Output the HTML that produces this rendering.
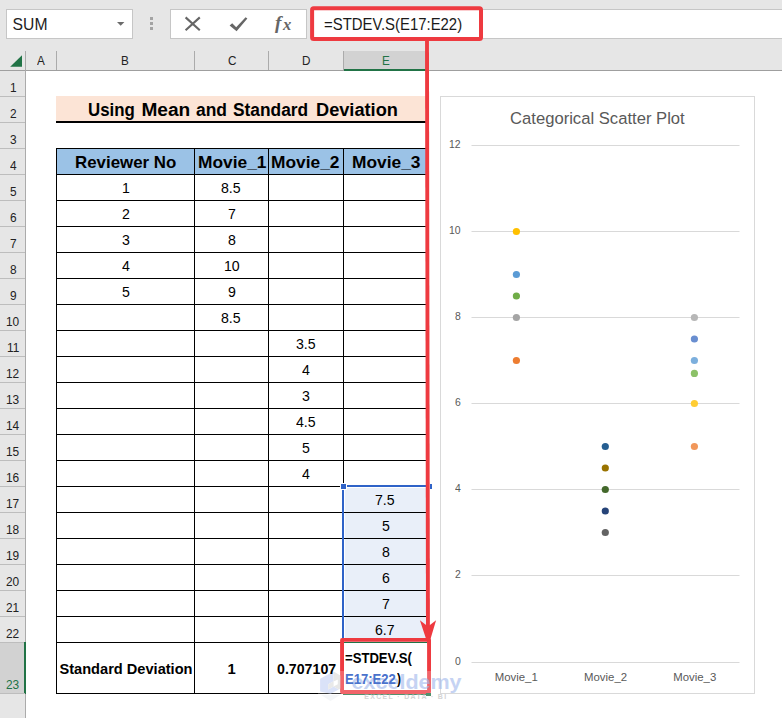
<!DOCTYPE html><html lang="en"><head><meta charset="utf-8"><title>Categorical Scatter Plot - STDEV.S</title><style>html,body{margin:0;padding:0;background:#fff}#root{position:relative;width:782px;height:718px;overflow:hidden;background:#fff;font-family:'Liberation Sans', sans-serif}.b{position:absolute;display:block}.t{position:absolute;white-space:nowrap;line-height:1;transform-origin:0 0;font-kerning:normal}</style></head><body><div id="root">
<div class="b" style="left:0px;top:0px;width:782px;height:70px;background:#e6e6e6"></div>
<div class="b" style="left:6px;top:9px;width:127px;height:30px;background:#fff;border:1px solid #c6c6c6;box-sizing:border-box"></div>
<svg class="b" style="left:116px;top:21px" width="10" height="6" viewBox="0 0 10 6"><polygon points="1,1 8.4,1 4.7,4.8" fill="#6b6b6b"/></svg>
<div class="b" style="left:150px;top:17px;width:3px;height:3px;background:#a3a3a3"></div>
<div class="b" style="left:150px;top:22px;width:3px;height:3px;background:#a3a3a3"></div>
<div class="b" style="left:150px;top:27px;width:3px;height:3px;background:#a3a3a3"></div>
<div class="b" style="left:170px;top:9px;width:137px;height:30px;background:#fff;border:1px solid #c6c6c6;box-sizing:border-box"></div>
<svg class="b" style="left:184px;top:16px" width="18" height="16" viewBox="0 0 18 16"><path d="M1.6 1.4 L15.8 14.2 M15.8 1.4 L1.6 14.2" stroke="#666" stroke-width="2.1" fill="none"/></svg>
<svg class="b" style="left:228px;top:16px" width="21" height="17" viewBox="0 0 21 17"><path d="M1.6 9.6 L4.2 7.2 L8.2 11.2 L17.6 1.2 L19.4 2.6 L8.6 15.2 Z" fill="#666"/></svg>
<div class="b" style="left:311px;top:9px;width:471px;height:30px;background:#fff;border-top:1px solid #c6c6c6;border-bottom:1px solid #c6c6c6;box-sizing:border-box"></div>
<div class="b" style="left:0px;top:70px;width:782px;height:1px;background:#9f9f9f"></div>
<svg class="b" style="left:9px;top:54px" width="14" height="14" viewBox="0 0 14 14"><polygon points="1.2,12.8 13,12.8 13,1.2" fill="#217346"/></svg>
<div class="b" style="left:25px;top:51px;width:1px;height:20px;background:#ababab"></div>
<div class="b" style="left:56px;top:51px;width:1px;height:19px;background:#ababab"></div>
<div class="b" style="left:194px;top:51px;width:1px;height:19px;background:#ababab"></div>
<div class="b" style="left:268px;top:51px;width:1px;height:19px;background:#ababab"></div>
<div class="b" style="left:343px;top:51px;width:1px;height:19px;background:#ababab"></div>
<div class="b" style="left:344px;top:51px;width:83px;height:19px;background:#d2d2d2"></div>
<div class="b" style="left:344px;top:69px;width:83px;height:2px;background:#217346"></div>
<div class="b" style="left:427px;top:51px;width:1px;height:19px;background:#ababab"></div>
<div class="b" style="left:0px;top:71px;width:782px;height:647px;background:#fff"></div>
<div class="b" style="left:0px;top:71px;width:25px;height:647px;background:#e6e6e6"></div>
<div class="b" style="left:25px;top:70px;width:1px;height:648px;background:#ababab"></div>
<div class="b" style="left:0px;top:96px;width:25px;height:1px;background:#bdbdbd"></div>
<div class="b" style="left:0px;top:122px;width:25px;height:1px;background:#bdbdbd"></div>
<div class="b" style="left:0px;top:148px;width:25px;height:1px;background:#bdbdbd"></div>
<div class="b" style="left:0px;top:174px;width:25px;height:1px;background:#bdbdbd"></div>
<div class="b" style="left:0px;top:200px;width:25px;height:1px;background:#bdbdbd"></div>
<div class="b" style="left:0px;top:226px;width:25px;height:1px;background:#bdbdbd"></div>
<div class="b" style="left:0px;top:252px;width:25px;height:1px;background:#bdbdbd"></div>
<div class="b" style="left:0px;top:278px;width:25px;height:1px;background:#bdbdbd"></div>
<div class="b" style="left:0px;top:304px;width:25px;height:1px;background:#bdbdbd"></div>
<div class="b" style="left:0px;top:330px;width:25px;height:1px;background:#bdbdbd"></div>
<div class="b" style="left:0px;top:356px;width:25px;height:1px;background:#bdbdbd"></div>
<div class="b" style="left:0px;top:382px;width:25px;height:1px;background:#bdbdbd"></div>
<div class="b" style="left:0px;top:408px;width:25px;height:1px;background:#bdbdbd"></div>
<div class="b" style="left:0px;top:434px;width:25px;height:1px;background:#bdbdbd"></div>
<div class="b" style="left:0px;top:460px;width:25px;height:1px;background:#bdbdbd"></div>
<div class="b" style="left:0px;top:486px;width:25px;height:1px;background:#bdbdbd"></div>
<div class="b" style="left:0px;top:512px;width:25px;height:1px;background:#bdbdbd"></div>
<div class="b" style="left:0px;top:538px;width:25px;height:1px;background:#bdbdbd"></div>
<div class="b" style="left:0px;top:564px;width:25px;height:1px;background:#bdbdbd"></div>
<div class="b" style="left:0px;top:590px;width:25px;height:1px;background:#bdbdbd"></div>
<div class="b" style="left:0px;top:616px;width:25px;height:1px;background:#bdbdbd"></div>
<div class="b" style="left:0px;top:642px;width:25px;height:1px;background:#bdbdbd"></div>
<div class="b" style="left:0px;top:643px;width:25px;height:50px;background:#d2d2d2"></div>
<div class="b" style="left:24px;top:642px;width:2px;height:52px;background:#217346"></div>
<div class="b" style="left:0px;top:693px;width:25px;height:1px;background:#bdbdbd"></div>
<div class="b" style="left:56px;top:96px;width:371px;height:25px;background:#fce4d6"></div>
<div class="b" style="left:56px;top:121px;width:371px;height:2px;background:#000"></div>
<div class="b" style="left:56px;top:148px;width:371px;height:26px;background:#9bc2e6"></div>
<div class="b" style="left:345px;top:488px;width:82px;height:154px;background:#e9eff9"></div>
<div class="b" style="left:56px;top:148px;width:371px;height:1px;background:#000"></div>
<div class="b" style="left:56px;top:174px;width:371px;height:1px;background:#000"></div>
<div class="b" style="left:56px;top:200px;width:371px;height:1px;background:#000"></div>
<div class="b" style="left:56px;top:226px;width:371px;height:1px;background:#000"></div>
<div class="b" style="left:56px;top:252px;width:371px;height:1px;background:#000"></div>
<div class="b" style="left:56px;top:278px;width:371px;height:1px;background:#000"></div>
<div class="b" style="left:56px;top:304px;width:371px;height:1px;background:#000"></div>
<div class="b" style="left:56px;top:330px;width:371px;height:1px;background:#000"></div>
<div class="b" style="left:56px;top:356px;width:371px;height:1px;background:#000"></div>
<div class="b" style="left:56px;top:382px;width:371px;height:1px;background:#000"></div>
<div class="b" style="left:56px;top:408px;width:371px;height:1px;background:#000"></div>
<div class="b" style="left:56px;top:434px;width:371px;height:1px;background:#000"></div>
<div class="b" style="left:56px;top:460px;width:371px;height:1px;background:#000"></div>
<div class="b" style="left:56px;top:486px;width:371px;height:1px;background:#000"></div>
<div class="b" style="left:56px;top:512px;width:371px;height:1px;background:#000"></div>
<div class="b" style="left:56px;top:538px;width:371px;height:1px;background:#000"></div>
<div class="b" style="left:56px;top:564px;width:371px;height:1px;background:#000"></div>
<div class="b" style="left:56px;top:590px;width:371px;height:1px;background:#000"></div>
<div class="b" style="left:56px;top:616px;width:371px;height:1px;background:#000"></div>
<div class="b" style="left:56px;top:642px;width:371px;height:1px;background:#000"></div>
<div class="b" style="left:56px;top:693px;width:371px;height:1px;background:#000"></div>
<div class="b" style="left:56px;top:148px;width:1px;height:546px;background:#000"></div>
<div class="b" style="left:194px;top:148px;width:1px;height:546px;background:#000"></div>
<div class="b" style="left:268px;top:148px;width:1px;height:546px;background:#000"></div>
<div class="b" style="left:343px;top:148px;width:1px;height:546px;background:#000"></div>
<div class="b" style="left:342px;top:485px;width:2px;height:157px;background:#2f63c8"></div>
<div class="b" style="left:343px;top:485px;width:84px;height:2px;background:#2f63c8"></div>
<div class="b" style="left:341px;top:484px;width:5px;height:5px;background:#2f63c8;outline:1px solid #fff"></div>
<div class="b" style="left:430px;top:484px;width:1.5px;height:5px;background:#2f63c8"></div>
<div class="b" style="left:343px;top:693px;width:84px;height:2px;background:#217346"></div>
<div class="b" style="left:344px;top:642px;width:83px;height:1px;background:#217346"></div>
<svg class="b" style="left:0;top:0" width="782" height="718" viewBox="0 0 782 718"><rect x="440.5" y="96.5" width="314" height="597" fill="#fff" stroke="#d9d9d9" stroke-width="1"/><line x1="471.5" y1="662.5" x2="739.5" y2="662.5" stroke="#d9d9d9" stroke-width="1"/><line x1="471.5" y1="575.5" x2="739.5" y2="575.5" stroke="#d9d9d9" stroke-width="1"/><line x1="471.5" y1="489.5" x2="739.5" y2="489.5" stroke="#d9d9d9" stroke-width="1"/><line x1="471.5" y1="403.5" x2="739.5" y2="403.5" stroke="#d9d9d9" stroke-width="1"/><line x1="471.5" y1="317.5" x2="739.5" y2="317.5" stroke="#d9d9d9" stroke-width="1"/><line x1="471.5" y1="231.5" x2="739.5" y2="231.5" stroke="#d9d9d9" stroke-width="1"/><line x1="471.5" y1="145.5" x2="739.5" y2="145.5" stroke="#d9d9d9" stroke-width="1"/><circle cx="516.4" cy="231.5" r="3.6" fill="#ffc000"/><circle cx="516.4" cy="274.5" r="3.6" fill="#5b9bd5"/><circle cx="516.4" cy="296.0" r="3.6" fill="#70ad47"/><circle cx="516.4" cy="317.5" r="3.6" fill="#a5a5a5"/><circle cx="516.4" cy="360.5" r="3.6" fill="#ed7d31"/><circle cx="605.3" cy="446.5" r="3.6" fill="#255e91"/><circle cx="605.3" cy="468.0" r="3.6" fill="#997300"/><circle cx="605.3" cy="489.5" r="3.6" fill="#43682b"/><circle cx="605.3" cy="511.0" r="3.6" fill="#264478"/><circle cx="605.3" cy="532.5" r="3.6" fill="#636363"/><circle cx="694.4" cy="317.5" r="3.6" fill="#b7b7b7"/><circle cx="694.4" cy="339.0" r="3.6" fill="#698ed0"/><circle cx="694.4" cy="360.5" r="3.6" fill="#7cafdd"/><circle cx="694.4" cy="373.4" r="3.6" fill="#8cc168"/><circle cx="694.4" cy="403.5" r="3.6" fill="#ffcd33"/><circle cx="694.4" cy="446.5" r="3.6" fill="#f1975a"/></svg>
<svg class="b" style="left:0;top:0" width="782" height="718" viewBox="0 0 782 718">
<rect x="312.1" y="8.3" width="168.9" height="30.8" fill="none" stroke="#ee3a40" stroke-width="4" rx="1.6" stroke-linejoin="round"/>
<line x1="427.0" y1="40" x2="427.95" y2="628" stroke="#ee3a40" stroke-width="3.9"/>
<path d="M419.9 620.2 L428 626.5 L436.1 620.2 L428.4 646 Z" fill="#ee3a40"/>
<rect x="342.05" y="639.9" width="87" height="52.15" fill="none" stroke="#ee3a40" stroke-width="3.9" stroke-linejoin="round"/>
</svg>
<div class="b" style="left:426px;top:693px;width:5px;height:3px;background:#217346"></div>
<svg class="b" style="left:0;top:0" width="782" height="718" viewBox="0 0 782 718">
<rect x="318" y="671" width="113" height="30" fill="#fff" opacity="0.22"/>
<g opacity="0.62">
<path d="M320.1 678.7 L333.6 671.6 L333.6 681.2 L328.2 684.2 L328.2 689.4 L333.6 686.6 L338.8 689.6 L330.6 693.8 L320.1 691.4 Z" fill="#c5d1f5"/>
<path d="M333.6 671.6 L340.4 675.4 L340.4 688.6 L338.8 689.6 L333.6 686.6 L337.8 684.2 L337.8 679.4 L333.6 681.6 Z" fill="#d9d9d9"/>
<path d="M328.2 684.2 L333.6 681.2 L333.6 686.6 L328.2 689.4 Z" fill="#dcdcdc"/>
<path d="M321 695 L340 695 L330.5 701 Z" fill="#eef1f4"/>
<text x="351.6" y="688.6" font-family="Liberation Sans, sans-serif" font-weight="700" font-size="21" fill="#a3b9ec" textLength="110" lengthAdjust="spacingAndGlyphs">exceldemy</text>
<text x="364.2" y="698.8" font-family="Liberation Sans, sans-serif" font-weight="700" font-size="7" fill="#b9b9b9" textLength="82" lengthAdjust="spacing">EXCEL · DATA · BI</text>
</g></svg>
<span class="t" id="t0" style="font-family:'Liberation Sans', sans-serif;font-size:15.7px;font-weight:400;font-style:normal;color:#222;left:12.60px;top:17.20px;">SUM</span>
<span class="t" id="t1" style="font-family:'Liberation Serif', serif;font-size:19.2px;font-weight:700;font-style:italic;color:#666;left:275.10px;top:12.50px;">f</span>
<span class="t" id="t2" style="font-family:'Liberation Serif', serif;font-size:17.4px;font-weight:700;font-style:italic;color:#666;left:282.60px;top:16.10px;transform:scaleX(0.9537);">x</span>
<span class="t" id="t3" style="font-family:'Liberation Sans', sans-serif;font-size:15.9px;font-weight:400;font-style:normal;color:#1a1a1a;left:324.30px;top:17.30px;transform:scaleX(0.9371);">=STDEV.S(E17:E22)</span>
<span class="t" id="t4" style="font-family:'Liberation Sans', sans-serif;font-size:13px;font-weight:400;font-style:normal;color:#222;left:36.90px;top:53.90px;transform:scaleX(0.9000);">A</span>
<span class="t" id="t5" style="font-family:'Liberation Sans', sans-serif;font-size:13px;font-weight:400;font-style:normal;color:#222;left:121.40px;top:53.90px;transform:scaleX(0.9000);">B</span>
<span class="t" id="t6" style="font-family:'Liberation Sans', sans-serif;font-size:13px;font-weight:400;font-style:normal;color:#222;left:228.17px;top:53.90px;transform:scaleX(0.9000);">C</span>
<span class="t" id="t7" style="font-family:'Liberation Sans', sans-serif;font-size:13px;font-weight:400;font-style:normal;color:#222;left:302.07px;top:53.90px;transform:scaleX(0.9000);">D</span>
<span class="t" id="t8" style="font-family:'Liberation Sans', sans-serif;font-size:13px;font-weight:400;font-style:normal;color:#217346;left:382.30px;top:53.90px;transform:scaleX(0.9000);">E</span>
<span class="t" id="t9" style="font-family:'Liberation Sans', sans-serif;font-size:12.5px;font-weight:400;font-style:normal;color:#222;left:9.60px;top:82.30px;transform:scaleX(0.9500);">1</span>
<span class="t" id="t10" style="font-family:'Liberation Sans', sans-serif;font-size:12.5px;font-weight:400;font-style:normal;color:#222;left:9.60px;top:108.30px;transform:scaleX(0.9500);">2</span>
<span class="t" id="t11" style="font-family:'Liberation Sans', sans-serif;font-size:12.5px;font-weight:400;font-style:normal;color:#222;left:9.60px;top:134.30px;transform:scaleX(0.9500);">3</span>
<span class="t" id="t12" style="font-family:'Liberation Sans', sans-serif;font-size:12.5px;font-weight:400;font-style:normal;color:#222;left:9.60px;top:160.30px;transform:scaleX(0.9500);">4</span>
<span class="t" id="t13" style="font-family:'Liberation Sans', sans-serif;font-size:12.5px;font-weight:400;font-style:normal;color:#222;left:9.60px;top:186.30px;transform:scaleX(0.9500);">5</span>
<span class="t" id="t14" style="font-family:'Liberation Sans', sans-serif;font-size:12.5px;font-weight:400;font-style:normal;color:#222;left:9.60px;top:212.30px;transform:scaleX(0.9500);">6</span>
<span class="t" id="t15" style="font-family:'Liberation Sans', sans-serif;font-size:12.5px;font-weight:400;font-style:normal;color:#222;left:9.60px;top:238.30px;transform:scaleX(0.9500);">7</span>
<span class="t" id="t16" style="font-family:'Liberation Sans', sans-serif;font-size:12.5px;font-weight:400;font-style:normal;color:#222;left:9.60px;top:264.30px;transform:scaleX(0.9500);">8</span>
<span class="t" id="t17" style="font-family:'Liberation Sans', sans-serif;font-size:12.5px;font-weight:400;font-style:normal;color:#222;left:9.60px;top:290.30px;transform:scaleX(0.9500);">9</span>
<span class="t" id="t18" style="font-family:'Liberation Sans', sans-serif;font-size:12.5px;font-weight:400;font-style:normal;color:#222;left:6.29px;top:316.30px;transform:scaleX(0.9500);">10</span>
<span class="t" id="t19" style="font-family:'Liberation Sans', sans-serif;font-size:12.5px;font-weight:400;font-style:normal;color:#222;left:6.73px;top:342.30px;transform:scaleX(0.9500);">11</span>
<span class="t" id="t20" style="font-family:'Liberation Sans', sans-serif;font-size:12.5px;font-weight:400;font-style:normal;color:#222;left:6.29px;top:368.30px;transform:scaleX(0.9500);">12</span>
<span class="t" id="t21" style="font-family:'Liberation Sans', sans-serif;font-size:12.5px;font-weight:400;font-style:normal;color:#222;left:6.29px;top:394.30px;transform:scaleX(0.9500);">13</span>
<span class="t" id="t22" style="font-family:'Liberation Sans', sans-serif;font-size:12.5px;font-weight:400;font-style:normal;color:#222;left:6.29px;top:420.30px;transform:scaleX(0.9500);">14</span>
<span class="t" id="t23" style="font-family:'Liberation Sans', sans-serif;font-size:12.5px;font-weight:400;font-style:normal;color:#222;left:6.29px;top:446.30px;transform:scaleX(0.9500);">15</span>
<span class="t" id="t24" style="font-family:'Liberation Sans', sans-serif;font-size:12.5px;font-weight:400;font-style:normal;color:#222;left:6.29px;top:472.30px;transform:scaleX(0.9500);">16</span>
<span class="t" id="t25" style="font-family:'Liberation Sans', sans-serif;font-size:12.5px;font-weight:400;font-style:normal;color:#222;left:6.29px;top:498.30px;transform:scaleX(0.9500);">17</span>
<span class="t" id="t26" style="font-family:'Liberation Sans', sans-serif;font-size:12.5px;font-weight:400;font-style:normal;color:#222;left:6.29px;top:524.30px;transform:scaleX(0.9500);">18</span>
<span class="t" id="t27" style="font-family:'Liberation Sans', sans-serif;font-size:12.5px;font-weight:400;font-style:normal;color:#222;left:6.29px;top:550.30px;transform:scaleX(0.9500);">19</span>
<span class="t" id="t28" style="font-family:'Liberation Sans', sans-serif;font-size:12.5px;font-weight:400;font-style:normal;color:#222;left:6.29px;top:576.30px;transform:scaleX(0.9500);">20</span>
<span class="t" id="t29" style="font-family:'Liberation Sans', sans-serif;font-size:12.5px;font-weight:400;font-style:normal;color:#222;left:6.29px;top:602.30px;transform:scaleX(0.9500);">21</span>
<span class="t" id="t30" style="font-family:'Liberation Sans', sans-serif;font-size:12.5px;font-weight:400;font-style:normal;color:#222;left:6.29px;top:628.30px;transform:scaleX(0.9500);">22</span>
<span class="t" id="t31" style="font-family:'Liberation Sans', sans-serif;font-size:12.5px;font-weight:400;font-style:normal;color:#217346;left:6.29px;top:679.30px;transform:scaleX(0.9500);">23</span>
<span class="t" id="t32" style="font-family:'Liberation Sans', sans-serif;font-size:19.1px;font-weight:700;font-style:normal;color:#000;left:88.40px;top:99.50px;transform:scaleX(0.8822);">Using</span>
<span class="t" id="t33" style="font-family:'Liberation Sans', sans-serif;font-size:19.1px;font-weight:700;font-style:normal;color:#000;left:141.40px;top:99.50px;">Mean</span>
<span class="t" id="t34" style="font-family:'Liberation Sans', sans-serif;font-size:19.1px;font-weight:700;font-style:normal;color:#000;left:196.00px;top:99.50px;transform:scaleX(0.9130);">and</span>
<span class="t" id="t35" style="font-family:'Liberation Sans', sans-serif;font-size:19.1px;font-weight:700;font-style:normal;color:#000;left:233.20px;top:99.50px;transform:scaleX(0.9074);">Standard</span>
<span class="t" id="t36" style="font-family:'Liberation Sans', sans-serif;font-size:19.1px;font-weight:700;font-style:normal;color:#000;left:315.60px;top:99.50px;transform:scaleX(0.9528);">Deviation</span>
<span class="t" id="t37" style="font-family:'Liberation Sans', sans-serif;font-size:16.3px;font-weight:700;font-style:normal;color:#000;left:74.80px;top:153.80px;transform:scaleX(1.0365);">Reviewer No</span>
<span class="t" id="t38" style="font-family:'Liberation Sans', sans-serif;font-size:16.3px;font-weight:700;font-style:normal;color:#000;left:197.80px;top:153.80px;transform:scaleX(1.0659);">Movie_1</span>
<span class="t" id="t39" style="font-family:'Liberation Sans', sans-serif;font-size:16.3px;font-weight:700;font-style:normal;color:#000;left:271.20px;top:153.80px;transform:scaleX(1.0659);">Movie_2</span>
<span class="t" id="t40" style="font-family:'Liberation Sans', sans-serif;font-size:16.3px;font-weight:700;font-style:normal;color:#000;left:351.80px;top:153.80px;transform:scaleX(1.0659);">Movie_3</span>
<span class="t" id="t41" style="font-family:'Liberation Sans', sans-serif;font-size:14.8px;font-weight:400;font-style:normal;color:#000;left:121.97px;top:180.70px;transform:scaleX(0.9550);">1</span>
<span class="t" id="t42" style="font-family:'Liberation Sans', sans-serif;font-size:14.8px;font-weight:400;font-style:normal;color:#000;left:121.97px;top:206.70px;transform:scaleX(0.9550);">2</span>
<span class="t" id="t43" style="font-family:'Liberation Sans', sans-serif;font-size:14.8px;font-weight:400;font-style:normal;color:#000;left:121.97px;top:232.70px;transform:scaleX(0.9550);">3</span>
<span class="t" id="t44" style="font-family:'Liberation Sans', sans-serif;font-size:14.8px;font-weight:400;font-style:normal;color:#000;left:121.97px;top:258.70px;transform:scaleX(0.9550);">4</span>
<span class="t" id="t45" style="font-family:'Liberation Sans', sans-serif;font-size:14.8px;font-weight:400;font-style:normal;color:#000;left:121.97px;top:284.70px;transform:scaleX(0.9550);">5</span>
<span class="t" id="t46" style="font-family:'Liberation Sans', sans-serif;font-size:14.8px;font-weight:400;font-style:normal;color:#000;left:221.47px;top:180.70px;transform:scaleX(0.9550);">8.5</span>
<span class="t" id="t47" style="font-family:'Liberation Sans', sans-serif;font-size:14.8px;font-weight:400;font-style:normal;color:#000;left:227.97px;top:206.70px;transform:scaleX(0.9550);">7</span>
<span class="t" id="t48" style="font-family:'Liberation Sans', sans-serif;font-size:14.8px;font-weight:400;font-style:normal;color:#000;left:227.97px;top:232.70px;transform:scaleX(0.9550);">8</span>
<span class="t" id="t49" style="font-family:'Liberation Sans', sans-serif;font-size:14.8px;font-weight:400;font-style:normal;color:#000;left:224.04px;top:258.70px;transform:scaleX(0.9550);">10</span>
<span class="t" id="t50" style="font-family:'Liberation Sans', sans-serif;font-size:14.8px;font-weight:400;font-style:normal;color:#000;left:227.97px;top:284.70px;transform:scaleX(0.9550);">9</span>
<span class="t" id="t51" style="font-family:'Liberation Sans', sans-serif;font-size:14.8px;font-weight:400;font-style:normal;color:#000;left:221.47px;top:310.70px;transform:scaleX(0.9550);">8.5</span>
<span class="t" id="t52" style="font-family:'Liberation Sans', sans-serif;font-size:14.8px;font-weight:400;font-style:normal;color:#000;left:295.97px;top:336.70px;transform:scaleX(0.9550);">3.5</span>
<span class="t" id="t53" style="font-family:'Liberation Sans', sans-serif;font-size:14.8px;font-weight:400;font-style:normal;color:#000;left:302.47px;top:362.70px;transform:scaleX(0.9550);">4</span>
<span class="t" id="t54" style="font-family:'Liberation Sans', sans-serif;font-size:14.8px;font-weight:400;font-style:normal;color:#000;left:302.47px;top:388.70px;transform:scaleX(0.9550);">3</span>
<span class="t" id="t55" style="font-family:'Liberation Sans', sans-serif;font-size:14.8px;font-weight:400;font-style:normal;color:#000;left:295.97px;top:414.70px;transform:scaleX(0.9550);">4.5</span>
<span class="t" id="t56" style="font-family:'Liberation Sans', sans-serif;font-size:14.8px;font-weight:400;font-style:normal;color:#000;left:302.47px;top:440.70px;transform:scaleX(0.9550);">5</span>
<span class="t" id="t57" style="font-family:'Liberation Sans', sans-serif;font-size:14.8px;font-weight:400;font-style:normal;color:#000;left:302.47px;top:466.70px;transform:scaleX(0.9550);">4</span>
<span class="t" id="t58" style="font-family:'Liberation Sans', sans-serif;font-size:14.8px;font-weight:400;font-style:normal;color:#000;left:375.47px;top:492.70px;transform:scaleX(0.9550);">7.5</span>
<span class="t" id="t59" style="font-family:'Liberation Sans', sans-serif;font-size:14.8px;font-weight:400;font-style:normal;color:#000;left:381.97px;top:518.70px;transform:scaleX(0.9550);">5</span>
<span class="t" id="t60" style="font-family:'Liberation Sans', sans-serif;font-size:14.8px;font-weight:400;font-style:normal;color:#000;left:381.97px;top:544.70px;transform:scaleX(0.9550);">8</span>
<span class="t" id="t61" style="font-family:'Liberation Sans', sans-serif;font-size:14.8px;font-weight:400;font-style:normal;color:#000;left:381.97px;top:570.70px;transform:scaleX(0.9550);">6</span>
<span class="t" id="t62" style="font-family:'Liberation Sans', sans-serif;font-size:14.8px;font-weight:400;font-style:normal;color:#000;left:381.97px;top:596.70px;transform:scaleX(0.9550);">7</span>
<span class="t" id="t63" style="font-family:'Liberation Sans', sans-serif;font-size:14.8px;font-weight:400;font-style:normal;color:#000;left:375.47px;top:622.70px;transform:scaleX(0.9550);">6.7</span>
<span class="t" id="t64" style="font-family:'Liberation Sans', sans-serif;font-size:14.6px;font-weight:700;font-style:normal;color:#000;left:59.50px;top:662.00px;">Standard Deviation</span>
<span class="t" id="t65" style="font-family:'Liberation Sans', sans-serif;font-size:14.8px;font-weight:700;font-style:normal;color:#000;left:227.38px;top:662.00px;">1</span>
<span class="t" id="t66" style="font-family:'Liberation Sans', sans-serif;font-size:14.6px;font-weight:700;font-style:normal;color:#000;left:276.60px;top:662.00px;transform:scaleX(0.9725);">0.707107</span>
<span class="t" id="t67" style="font-family:'Liberation Sans', sans-serif;font-size:14.2px;font-weight:700;font-style:normal;color:#000;left:344.70px;top:650.90px;transform:scaleX(0.9238);">=STDEV.S(</span>
<span class="t" id="t68" style="font-family:'Liberation Sans', sans-serif;font-size:14.2px;font-weight:700;font-style:normal;color:#4a72cc;left:345.10px;top:671.60px;transform:scaleX(0.9182);">E17:E22</span>
<span class="t" id="t69" style="font-family:'Liberation Sans', sans-serif;font-size:14.2px;font-weight:700;font-style:normal;color:#000;left:396.90px;top:671.60px;transform:scaleX(0.8449);">)</span>
<span class="t" id="t70" style="font-family:'Liberation Sans', sans-serif;font-size:16.9px;font-weight:400;font-style:normal;color:#595959;left:510.10px;top:110.90px;transform:scaleX(0.9846);">Categorical Scatter Plot</span>
<span class="t" id="t71" style="font-family:'Liberation Sans', sans-serif;font-size:11.2px;font-weight:400;font-style:normal;color:#595959;left:454.80px;top:655.90px;transform:scaleX(0.9303);">0</span>
<span class="t" id="t72" style="font-family:'Liberation Sans', sans-serif;font-size:11.2px;font-weight:400;font-style:normal;color:#595959;left:454.80px;top:568.90px;transform:scaleX(0.9303);">2</span>
<span class="t" id="t73" style="font-family:'Liberation Sans', sans-serif;font-size:11.2px;font-weight:400;font-style:normal;color:#595959;left:454.80px;top:482.90px;transform:scaleX(0.9303);">4</span>
<span class="t" id="t74" style="font-family:'Liberation Sans', sans-serif;font-size:11.2px;font-weight:400;font-style:normal;color:#595959;left:454.80px;top:396.90px;transform:scaleX(0.9303);">6</span>
<span class="t" id="t75" style="font-family:'Liberation Sans', sans-serif;font-size:11.2px;font-weight:400;font-style:normal;color:#595959;left:454.80px;top:310.90px;transform:scaleX(0.9303);">8</span>
<span class="t" id="t76" style="font-family:'Liberation Sans', sans-serif;font-size:11.2px;font-weight:400;font-style:normal;color:#595959;left:449.00px;top:224.90px;transform:scaleX(0.9315);">10</span>
<span class="t" id="t77" style="font-family:'Liberation Sans', sans-serif;font-size:11.2px;font-weight:400;font-style:normal;color:#595959;left:449.00px;top:138.90px;transform:scaleX(0.9315);">12</span>
<span class="t" id="t78" style="font-family:'Liberation Sans', sans-serif;font-size:11.4px;font-weight:400;font-style:normal;color:#595959;left:494.70px;top:671.50px;">Movie_1</span>
<span class="t" id="t79" style="font-family:'Liberation Sans', sans-serif;font-size:11.4px;font-weight:400;font-style:normal;color:#595959;left:584.00px;top:671.50px;">Movie_2</span>
<span class="t" id="t80" style="font-family:'Liberation Sans', sans-serif;font-size:11.4px;font-weight:400;font-style:normal;color:#595959;left:673.20px;top:671.50px;">Movie_3</span>
</div></body></html>
